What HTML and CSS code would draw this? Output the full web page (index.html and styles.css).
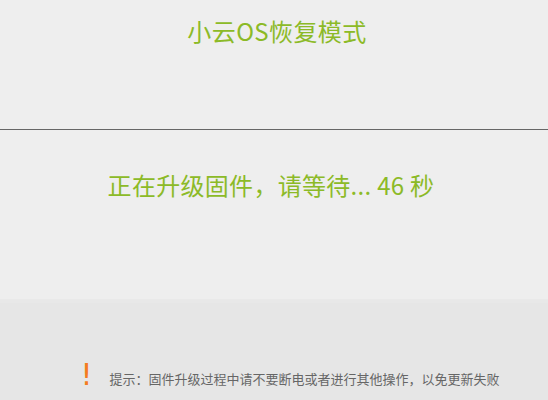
FILE: index.html
```html
<!DOCTYPE html>
<html lang="zh-CN">
<head>
<meta charset="utf-8">
<title>小云OS恢复模式</title>
<link rel="stylesheet" href="styles.css">
</head>
<body>
<div class="page">
  <header class="header">
    <h1 class="title">小云OS恢复模式</h1>
  </header>
  <main class="main">
    <p class="message">正在升级固件，请等待... 46 秒</p>
  </main>
  <footer class="footer">
    <div class="tip">
      <span class="tip-icon">!</span>
      <span class="tip-text">提示：固件升级过程中请不要断电或者进行其他操作，以免更新失败</span>
    </div>
  </footer>
</div>
</body>
</html>
```

FILE: styles.css
```css
html, body {
  margin: 0;
  padding: 0;
  background: #eeeeee;
}
body {
  font-family: "Noto Sans CJK SC", "Noto Sans", sans-serif;
  width: 548px;
  height: 400px;
  overflow: hidden;
}
.page {
  display: flex;
  flex-direction: column;
  height: 400px;
}
.header {
  height: 129px;
  border-bottom: 1px solid #666666;
  box-sizing: content-box;
  display: flex;
  justify-content: center;
  align-items: flex-start;
}
.title {
  margin: 14px 0 0 6px;
  font-size: 24px;
  font-weight: normal;
  line-height: 34px;
  letter-spacing: 0.4px;
  color: #8cba27;
}
.main {
  height: 169px;
  display: flex;
  justify-content: center;
  align-items: flex-start;
}
.message {
  margin: 38px 6px 0 0;
  font-size: 24px;
  line-height: 34px;
  letter-spacing: 0.3px;
  color: #8cba27;
}
.footer {
  flex: 1;
  background: #e6e6e6;
  box-shadow: inset 0 1px 0 #e9e9e9, inset 0 4px 0 #e8e8e8;
  display: flex;
  justify-content: center;
  align-items: flex-start;
}
.tip {
  display: flex;
  align-items: flex-end;
  margin-top: 61px;
  margin-left: 32px;
  gap: 17px;
}
.tip-icon {
  font-family: "DejaVu Sans", sans-serif;
  font-size: 30px;
  line-height: 30px;
  color: #f47c20;
  font-weight: normal;
}
.tip-text {
  font-size: 13px;
  line-height: 22px;
  color: #666666;
}
```
